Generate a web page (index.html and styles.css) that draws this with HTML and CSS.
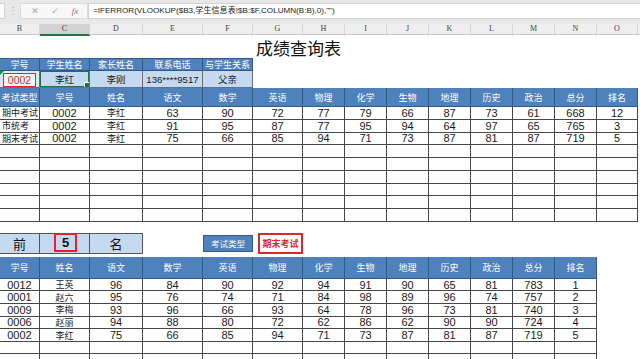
FILE: index.html
```html
<!DOCTYPE html>
<html lang="zh">
<head>
<meta charset="utf-8">
<title>成绩查询表</title>
<link rel="stylesheet" href="styles.css">
</head>
<body>
<div class="fbar">
  <div class="namebox"></div>
  <div class="dots">⋮</div>
  <div class="fbtns"><span class="fi">✕</span><span class="fi">✓</span><span class="fi fx">fx</span></div>
  <div class="finput">=IFERROR(VLOOKUP($B3,学生信息表!$B:$F,COLUMN(B:B),0),"")</div>
</div>
<div class="colhdr">
  <div>B</div><div class="act">C</div><div>D</div><div>E</div><div>F</div><div>G</div><div>H</div><div>I</div><div>J</div><div>K</div><div>L</div><div>M</div><div>N</div><div>O</div>
</div>
<div class="sheet">
  <div class="title-row"><h1 class="title">成绩查询表</h1></div>

  <div class="info">
    <div class="c h">学号</div><div class="c h">学生姓名</div><div class="c h">家长姓名</div><div class="c h">联系电话</div><div class="c h">与学生关系</div>
    <div class="c lb err"><span class="idbox">0002</span></div><div class="c lb sel">李红</div><div class="c lb">李刚</div><div class="c lb phone">136****9517</div><div class="c lb">父亲</div>
  </div>

  <div class="main">
    <div class="c h">考试类型</div><div class="c h">学号</div><div class="c h">姓名</div><div class="c h">语文</div><div class="c h">数学</div><div class="c h">英语</div><div class="c h">物理</div><div class="c h">化学</div><div class="c h">生物</div><div class="c h">地理</div><div class="c h">历史</div><div class="c h">政治</div><div class="c h">总分</div><div class="c h">排名</div>

    <div class="c l">期中考试</div><div class="c n">0002</div><div class="c">李红</div><div class="c n">63</div><div class="c n">90</div><div class="c n">72</div><div class="c n">77</div><div class="c n">79</div><div class="c n">66</div><div class="c n">87</div><div class="c n">73</div><div class="c n">61</div><div class="c n">668</div><div class="c n">12</div>
    <div class="c l">市统考</div><div class="c n">0002</div><div class="c">李红</div><div class="c n">91</div><div class="c n">95</div><div class="c n">87</div><div class="c n">77</div><div class="c n">95</div><div class="c n">94</div><div class="c n">64</div><div class="c n">97</div><div class="c n">65</div><div class="c n">765</div><div class="c n">3</div>
    <div class="c l">期末考试</div><div class="c n">0002</div><div class="c">李红</div><div class="c n">75</div><div class="c n">66</div><div class="c n">85</div><div class="c n">94</div><div class="c n">71</div><div class="c n">73</div><div class="c n">87</div><div class="c n">81</div><div class="c n">87</div><div class="c n">719</div><div class="c n">5</div>

    <div class="c"></div><div class="c"></div><div class="c"></div><div class="c"></div><div class="c"></div><div class="c"></div><div class="c"></div><div class="c"></div><div class="c"></div><div class="c"></div><div class="c"></div><div class="c"></div><div class="c"></div><div class="c"></div>
    <div class="c"></div><div class="c"></div><div class="c"></div><div class="c"></div><div class="c"></div><div class="c"></div><div class="c"></div><div class="c"></div><div class="c"></div><div class="c"></div><div class="c"></div><div class="c"></div><div class="c"></div><div class="c"></div>
    <div class="c"></div><div class="c"></div><div class="c"></div><div class="c"></div><div class="c"></div><div class="c"></div><div class="c"></div><div class="c"></div><div class="c"></div><div class="c"></div><div class="c"></div><div class="c"></div><div class="c"></div><div class="c"></div>
    <div class="c"></div><div class="c"></div><div class="c"></div><div class="c"></div><div class="c"></div><div class="c"></div><div class="c"></div><div class="c"></div><div class="c"></div><div class="c"></div><div class="c"></div><div class="c"></div><div class="c"></div><div class="c"></div>
    <div class="c"></div><div class="c"></div><div class="c"></div><div class="c"></div><div class="c"></div><div class="c"></div><div class="c"></div><div class="c"></div><div class="c"></div><div class="c"></div><div class="c"></div><div class="c"></div><div class="c"></div><div class="c"></div>
    <div class="c"></div><div class="c"></div><div class="c"></div><div class="c"></div><div class="c"></div><div class="c"></div><div class="c"></div><div class="c"></div><div class="c"></div><div class="c"></div><div class="c"></div><div class="c"></div><div class="c"></div><div class="c"></div>
  </div>

  <div class="ctrl">
    <div class="k big">前</div>
    <div class="k five"><span class="topn">5</span></div>
    <div class="k big">名</div>
    <div class="blank"></div>
    <div class="etype"><span class="etype-lbl">考试类型</span></div>
    <div class="eval"><span class="evalbox">期末考试</span></div>
  </div>

  <div class="lower">
    <div class="c h">学号</div><div class="c h">姓名</div><div class="c h">语文</div><div class="c h">数学</div><div class="c h">英语</div><div class="c h">物理</div><div class="c h">化学</div><div class="c h">生物</div><div class="c h">地理</div><div class="c h">历史</div><div class="c h">政治</div><div class="c h">总分</div><div class="c h">排名</div>

    <div class="c n">0012</div><div class="c">王英</div><div class="c n">96</div><div class="c n">84</div><div class="c n">90</div><div class="c n">92</div><div class="c n">94</div><div class="c n">91</div><div class="c n">90</div><div class="c n">65</div><div class="c n">81</div><div class="c n">783</div><div class="c n">1</div>
    <div class="c n">0001</div><div class="c">赵六</div><div class="c n">95</div><div class="c n">76</div><div class="c n">74</div><div class="c n">71</div><div class="c n">84</div><div class="c n">98</div><div class="c n">89</div><div class="c n">96</div><div class="c n">74</div><div class="c n">757</div><div class="c n">2</div>
    <div class="c n">0009</div><div class="c">李梅</div><div class="c n">93</div><div class="c n">96</div><div class="c n">66</div><div class="c n">93</div><div class="c n">64</div><div class="c n">78</div><div class="c n">96</div><div class="c n">73</div><div class="c n">81</div><div class="c n">740</div><div class="c n">3</div>
    <div class="c n">0006</div><div class="c">赵丽</div><div class="c n">94</div><div class="c n">88</div><div class="c n">80</div><div class="c n">72</div><div class="c n">62</div><div class="c n">86</div><div class="c n">62</div><div class="c n">90</div><div class="c n">90</div><div class="c n">724</div><div class="c n">4</div>
    <div class="c n">0002</div><div class="c">李红</div><div class="c n">75</div><div class="c n">66</div><div class="c n">85</div><div class="c n">94</div><div class="c n">71</div><div class="c n">73</div><div class="c n">87</div><div class="c n">81</div><div class="c n">87</div><div class="c n">719</div><div class="c n">5</div>
    <div class="c"></div><div class="c"></div><div class="c"></div><div class="c"></div><div class="c"></div><div class="c"></div><div class="c"></div><div class="c"></div><div class="c"></div><div class="c"></div><div class="c"></div><div class="c"></div><div class="c"></div>
    <div class="c"></div><div class="c"></div><div class="c"></div><div class="c"></div><div class="c"></div><div class="c"></div><div class="c"></div><div class="c"></div><div class="c"></div><div class="c"></div><div class="c"></div><div class="c"></div><div class="c"></div>
  </div>
</div>
</body>
</html>
```

FILE: styles.css
```css
* { box-sizing: border-box; margin: 0; padding: 0; }

:root {
  --cols: 40px 50px 53px 60px 50px 50px 42px 42px 42px 42px 42px 42px 42px 41px;
  --blue: #4f81bd;
  --blue-line: #31598a;
  --light: #c5d9f1;
  --grid: #474747;
  --red: #e0262b;
}

body {
  margin: 0;
  width: 640px;
  height: 359px;
  overflow: hidden;
  background: #fff;
  font-family: "Liberation Sans", "Noto Sans CJK SC", sans-serif;
  color: #111;
}

/* formula bar */
.fbar {
  height: 24px;
  background: #e8e8e8;
  display: flex;
  align-items: flex-start;
  padding-top: 3px;
}
.namebox {
  width: 5px;
  height: 16px;
  background: #fff;
  border: 1px solid #d2d2d2;
  border-left: none;
}
.dots {
  width: 15px;
  height: 16px;
  color: #b0b0b0;
  font-size: 10px;
  line-height: 16px;
  text-align: center;
}
.fbtns {
  width: 68px;
  height: 16px;
  background: #f7f7f7;
  border: 1px solid #dadada;
  display: flex;
  align-items: center;
  padding-left: 9px;
  gap: 10px;
}
.fi {
  width: 10px;
  color: #a9a9a9;
  font-size: 9px;
  line-height: 14px;
  text-align: center;
  font-family: "DejaVu Sans", sans-serif;
}
.fx {
  font-family: "Liberation Serif", serif;
  font-style: italic;
  color: #777;
  font-size: 9px;
}
.finput {
  flex: 1;
  height: 16px;
  background: #fff;
  border: 1px solid #d2d2d2;
  border-right: none;
  padding-left: 4px;
  font-size: 8.1px;
  line-height: 14px;
  color: #222;
  white-space: nowrap;
}

/* column header */
.colhdr {
  height: 11px;
  display: grid;
  grid-template-columns: var(--cols);
  background: #efefef;
  border-bottom: 1px solid #c6c6c6;
}
.colhdr div {
  font-family: "Liberation Serif", serif;
  font-size: 8px;
  line-height: 10px;
  text-align: center;
  color: #444;
  border-right: 1px solid #d4d4d4;
}
.colhdr .act {
  background: #d3d3d3;
  border-bottom: 2px solid #217346;
}

/* sheet */
.sheet { display: flex; flex-direction: column; }

.title-row {
  height: 23px;
  padding-left: 256px;
  padding-top: 2px;
}
.title {
  font-family: "Noto Sans CJK SC", sans-serif;
  font-weight: 400;
  font-size: 17px;
  line-height: 21px;
  color: #111;
}

.c {
  display: flex;
  align-items: center;
  justify-content: center;
  border-right: 1px solid var(--grid);
  border-bottom: 1px solid var(--grid);
  font-size: 9px;
  font-family: "Liberation Sans", "Noto Sans CJK SC", sans-serif;
  white-space: nowrap;
  overflow: hidden;
  color: #1a1a1a;
}
.c.n { font-size: 11px; }
.c.l { justify-content: flex-start; padding-left: 2px; }
.c.h {
  background: var(--blue);
  color: #fff;
  border-right-color: var(--blue-line);
  border-bottom-color: var(--blue-line);
}

/* info table */
.info {
  display: grid;
  grid-template-columns: 40px 50px 53px 60px 50px;
  grid-template-rows: 13px 17px;
  width: 253px;
}
.info .c.h { border-top: 1px solid var(--blue-line); }
.c.lb {
  background: var(--light);
  border-right-color: #6f6f6f;
  border-bottom-color: #6f6f6f;
  font-size: 9.5px;
}
.c.phone { font-size: 9.6px; }
.c.err { position: relative; background: #dde7f3; }
.c.err::before {
  content: "";
  position: absolute;
  left: 0;
  top: 0;
  border-top: 4px solid #1e8a4a;
  border-right: 4px solid transparent;
}
.idbox {
  width: 33px;
  height: 14px;
  border: 1px solid var(--red);
  color: #d42a2e;
  font-size: 10.5px;
  display: flex;
  align-items: center;
  justify-content: center;
  margin-top: 1px;
  background: #f3f6fb;
}
.c.sel {
  position: relative;
  box-shadow: inset 0 0 0 1px #217346;
}
.c.sel::after {
  content: "";
  position: absolute;
  right: -1px;
  bottom: -1px;
  width: 4px;
  height: 4px;
  background: #217346;
  border: 1px solid #fff;
}

/* main table */
.main {
  display: grid;
  grid-template-columns: var(--cols);
  grid-template-rows: 19px repeat(9, 12.78px);
  width: 638px;
}

/* controls */
.ctrl {
  display: grid;
  grid-template-columns: 40px 50px 53px 60px 50px 50px;
  height: 19px;
  margin-top: 11px;
  width: 303px;
}
.k {
  background: var(--light);
  border-top: 1px solid #555;
  border-bottom: 1px solid #555;
  border-right: 1px solid #555;
  display: flex;
  align-items: center;
  justify-content: center;
  font-family: "Noto Sans CJK SC", sans-serif;
  font-size: 13px;
  color: #111;
}
.k.five { justify-content: flex-start; padding-left: 14px; }
.topn {
  width: 23px;
  height: 19px;
  margin-top: -1px;
  border: 2px solid var(--red);
  display: flex;
  align-items: center;
  justify-content: center;
  font-family: "Liberation Sans", sans-serif;
  font-weight: bold;
  font-size: 13px;
  color: #111;
}
.etype { padding: 2px 0; }
.etype-lbl {
  display: flex;
  align-items: center;
  justify-content: center;
  height: 100%;
  background: var(--blue);
  color: #fff;
  font-size: 8.5px;
  border: 1px solid var(--blue-line);
}
.eval { padding-left: 5px; }
.evalbox {
  display: flex;
  align-items: center;
  justify-content: center;
  width: 45px;
  height: 100%;
  border: 2px solid var(--red);
  color: var(--red);
  font-size: 9px;
  font-weight: bold;
  background: #fff;
}

/* lower table */
.lower {
  display: grid;
  grid-template-columns: 40px 50px 53px 60px 50px 50px 42px 42px 42px 42px 42px 42px 42px;
  grid-template-rows: 22px repeat(7, 12.6px);
  width: 597px;
  margin-top: 5px;
}
```
